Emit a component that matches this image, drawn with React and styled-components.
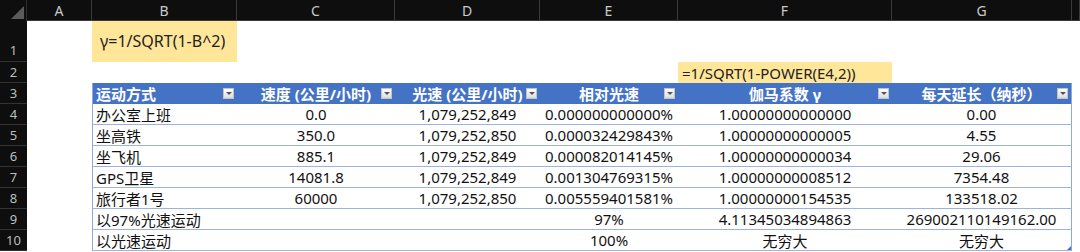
import React from 'react'
import styled, { createGlobalStyle } from 'styled-components'

const GlobalStyle = createGlobalStyle`
  html, body {
    margin: 0;
    padding: 0;
    background: #fff;
  }
  body {
    font-family: "Noto Sans", "Noto Sans CJK SC", sans-serif;
  }
`

const COLS = ['A', 'B', 'C', 'D', 'E', 'F', 'G']

const HEADERS = [
  { label: '运动方式', align: 'left' },
  { label: '速度 (公里/小时)' },
  { label: '光速 (公里/小时)' },
  { label: '相对光速' },
  { label: '伽马系数 γ' },
  { label: '每天延长（纳秒）' },
]

const ROWS = [
  ['办公室上班', '0.0', '1,079,252,849', '0.000000000000%', '1.00000000000000', '0.00'],
  ['坐高铁', '350.0', '1,079,252,850', '0.000032429843%', '1.00000000000005', '4.55'],
  ['坐飞机', '885.1', '1,079,252,849', '0.000082014145%', '1.00000000000034', '29.06'],
  ['GPS卫星', '14081.8', '1,079,252,849', '0.001304769315%', '1.00000000008512', '7354.48'],
  ['旅行者1号', '60000', '1,079,252,850', '0.005559401581%', '1.00000000154535', '133518.02'],
  ['以97%光速运动', '', '', '97%', '4.11345034894863', '269002110149162.00'],
  ['以光速运动', '', '', '100%', '无穷大', '无穷大'],
]

const Sheet = styled.div`
  display: grid;
  grid-template-columns: 27px 65px 145px 158px 145px 138px 214px 180px 1fr;
  grid-template-rows: 21px 41px 21px repeat(8, 21px);
  width: 1080px;
  height: 252px;
  overflow: hidden;
  background: #fff;
`

const Corner = styled.div`
  background: #0e0e0e;
  border-right: 1px solid #2e2e2e;
  position: relative;
  &::after {
    content: '';
    position: absolute;
    right: 2px;
    bottom: 2px;
    width: 0;
    height: 0;
    border-left: 13px solid transparent;
    border-bottom: 13px solid #5a5a5a;
  }
`

const ColHead = styled.div`
  background: #0e0e0e;
  color: #c9c9c9;
  font-size: 14px;
  display: flex;
  align-items: center;
  justify-content: center;
  border-right: 1px solid #3a3a3a;
  border-bottom: 1px solid #3a3a3a;
`

const RowHead = styled.div`
  background: #0e0e0e;
  color: #bdbdbd;
  font-size: 13px;
  display: flex;
  align-items: ${p => (p.$tall ? 'flex-end' : 'center')};
  justify-content: center;
  padding-bottom: ${p => (p.$tall ? '2px' : '0')};
  border-bottom: 1px solid #333;
`

const Cell = styled.div`
  font-size: 15px;
  color: #111;
  display: flex;
  align-items: center;
  justify-content: ${p => (p.$align === 'left' ? 'flex-start' : 'center')};
  padding: 0 3px;
  white-space: nowrap;
  overflow: hidden;
`

const Note = styled.div`
  background: #ffe699;
  color: #222;
  font-size: ${p => (p.$big ? '16px' : '15px')};
  display: flex;
  align-items: center;
  padding-left: ${p => (p.$big ? '8px' : '4px')};
  padding-bottom: ${p => (p.$big ? '2px' : '0')};
  white-space: nowrap;
`

const Blank = styled.div``

const HeadCell = styled.div`
  position: relative;
  background: #4472c4;
  color: #fff;
  font-weight: 700;
  font-size: 15px;
  display: flex;
  align-items: center;
  justify-content: ${p => (p.$align === 'left' ? 'flex-start' : 'center')};
  padding: 0 3px;
  white-space: nowrap;
  border-left: ${p => (p.$first ? '1px solid #8ea9db' : 'none')};
  border-right: ${p => (p.$last ? '1px solid #8ea9db' : 'none')};
`

const FilterButton = styled.span`
  position: absolute;
  right: 3px;
  top: 5px;
  width: 11px;
  height: 11px;
  box-sizing: border-box;
  background: linear-gradient(#ffffff, #dcdcdc);
  border: 1px solid #c2c2c2;
  display: flex;
  align-items: center;
  justify-content: center;
  &::after {
    content: '';
    width: 0;
    height: 0;
    border-left: 3px solid transparent;
    border-right: 3px solid transparent;
    border-top: 3px solid #555;
  }
`

const DataCell = styled(Cell)`
  position: relative;
  border-bottom: 1px solid #9bb4de;
  border-left: ${p => (p.$first ? '1px solid #8ea9db' : 'none')};
  border-right: ${p => (p.$last ? '1px solid #8ea9db' : 'none')};

  /* table resize handle on the last cell */
  &::after {
    content: ${p => (p.$corner ? "''" : 'none')};
    position: absolute;
    right: 0;
    bottom: 0;
    width: 0;
    height: 0;
    border-left: 4px solid transparent;
    border-bottom: 4px solid #4472c4;
  }
`

export default function App() {
  return (
    <>
      <GlobalStyle />
      <Sheet>
        <Corner />
        {COLS.map(c => (
          <ColHead key={c}>{c}</ColHead>
        ))}
        <ColHead />

        <RowHead $tall>1</RowHead>
        <Blank />
        <Note $big>γ=1/SQRT(1-B^2)</Note>
        <Blank />
        <Blank />
        <Blank />
        <Blank />
        <Blank />
        <Blank />

        <RowHead>2</RowHead>
        <Blank />
        <Blank />
        <Blank />
        <Blank />
        <Blank />
        <Note>=1/SQRT(1-POWER(E4,2))</Note>
        <Blank />
        <Blank />

        <RowHead>3</RowHead>
        <Blank />
        {HEADERS.map((h, i) => (
          <HeadCell key={h.label} $align={h.align} $first={i === 0} $last={i === HEADERS.length - 1}>
            {h.label}
            <FilterButton />
          </HeadCell>
        ))}
        <Blank />

        {ROWS.map((row, r) => (
          <React.Fragment key={r}>
            <RowHead>{r + 4}</RowHead>
            <Blank />
            {row.map((v, i) => (
              <DataCell
                key={i}
                $align={i === 0 ? 'left' : 'center'}
                $first={i === 0}
                $last={i === row.length - 1}
                $corner={i === row.length - 1 && r === ROWS.length - 1}
              >
                {v}
              </DataCell>
            ))}
            <Blank />
          </React.Fragment>
        ))}
      </Sheet>
    </>
  )
}
